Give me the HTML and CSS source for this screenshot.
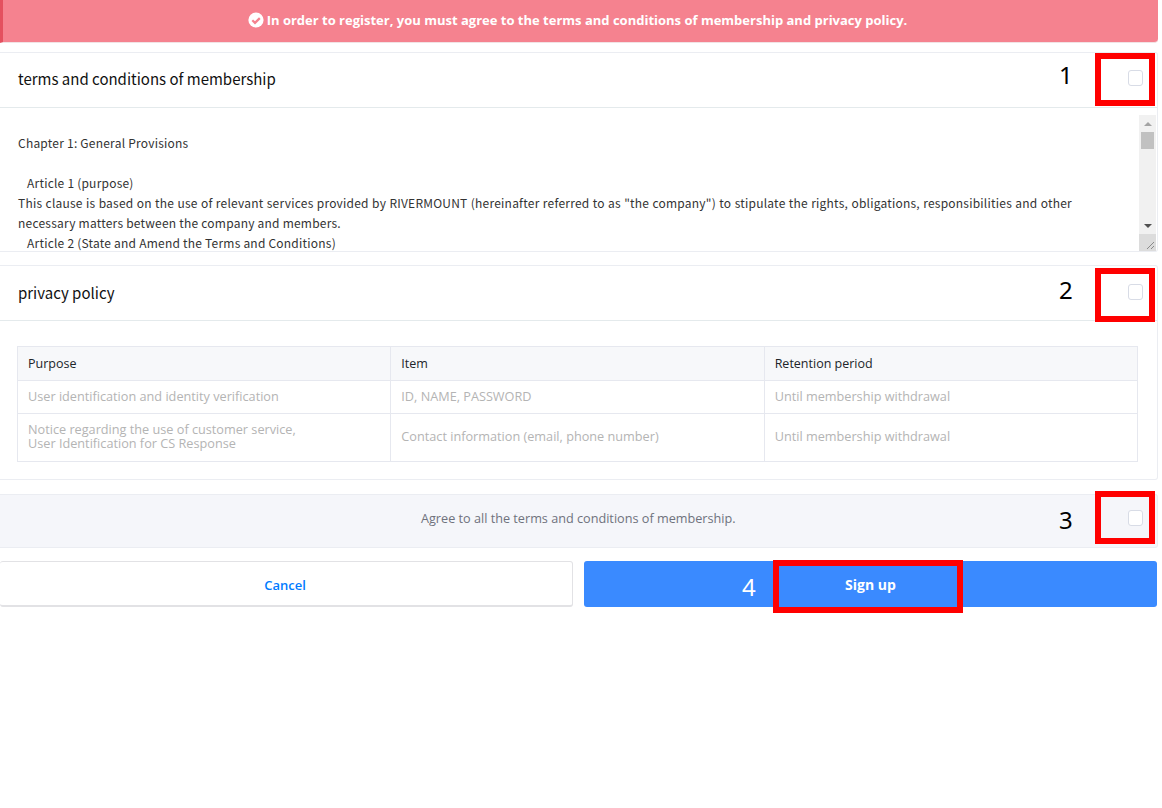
FILE: index.html
```html
<!DOCTYPE html>
<html lang="en">
<head>
<meta charset="utf-8">
<title>Sign up</title>
<link rel="stylesheet" href="styles.css">
</head>
<body>
<main class="page">
  <div class="alert">
    <svg class="alert-icon" viewBox="0 0 16 16" width="16" height="16"><circle cx="8" cy="8" r="7.6" fill="#fff"/><path d="M4.3 8.2 7 10.9l4.8-4.8" fill="none" stroke="#f5828f" stroke-width="2.2"/></svg>
    <span>In order to register, you must agree to the terms and conditions of membership and privacy policy.</span>
  </div>

  <section class="panel panel-terms">
    <header class="panel-head head-terms">
      <h2 class="panel-title">terms and conditions of membership</h2>
      <span class="check"></span>
    </header>
    <div class="terms-body">
      <div class="terms-text">
        <p class="line">Chapter 1: General Provisions</p>
        <p class="line">&nbsp;</p>
        <p class="line indent">Article 1 (purpose)</p>
        <p class="line">This clause is based on the use of relevant services provided by RIVERMOUNT (hereinafter referred to as "the company") to stipulate the rights, obligations, responsibilities and other necessary matters between the company and members.</p>
        <p class="line indent">Article 2 (State and Amend the Terms and Conditions)</p>
      </div>
      <div class="scrollbar">
        <div class="sb-btn"><span class="arrow-up"></span></div>
        <div class="sb-track"><div class="sb-thumb"></div></div>
        <div class="sb-btn"><span class="arrow-down"></span></div>
        <div class="sb-corner">
          <svg viewBox="0 0 16 16" width="16" height="16"><path d="M8 15 15 8M12 15l3-3" stroke="#8a8a8a" stroke-width="1" fill="none"/></svg>
        </div>
      </div>
    </div>
  </section>

  <section class="panel panel-privacy">
    <header class="panel-head head-privacy">
      <h2 class="panel-title">privacy policy</h2>
      <span class="check"></span>
    </header>
    <div class="privacy-body">
      <table class="policy">
        <thead>
          <tr><th>Purpose</th><th>Item</th><th>Retention period</th></tr>
        </thead>
        <tbody>
          <tr class="row-one"><td>User identification and identity verification</td><td>ID, NAME, PASSWORD</td><td>Until membership withdrawal</td></tr>
          <tr class="row-two"><td>Notice regarding the use of customer service,<br>User Identification for CS Response</td><td>Contact information (email, phone number)</td><td>Until membership withdrawal</td></tr>
        </tbody>
      </table>
    </div>
  </section>

  <section class="agree">
    <span class="agree-text">Agree to all the terms and conditions of membership.</span>
    <span class="check check-agree"></span>
  </section>

  <div class="actions">
    <button class="btn btn-cancel" type="button">Cancel</button>
    <button class="btn btn-submit" type="button">Sign up</button>
  </div>
</main>

<span class="mark mark-1"></span>
<span class="mark mark-2"></span>
<span class="mark mark-3"></span>
<span class="mark mark-4"></span>
<span class="num num-1">1</span>
<span class="num num-2">2</span>
<span class="num num-3">3</span>
<span class="num num-4">4</span>
</body>
</html>
```
FILE: styles.css
```css
* { box-sizing: border-box; }
html, body { margin: 0; padding: 0; background: #fff; }
body { font-family: "Open Sans", "Noto Sans", sans-serif; color: #575962; height: 808px; overflow: hidden; position: relative; }
.page { width: 1158px; display: flex; flex-direction: column; }

.alert {
  height: 43px;
  background: #f5828f;
  border-left: 3px solid #e4505f;
  border-bottom: 1px solid #f1e3e5;
  border-radius: 0 0 4px 0;
  color: #fff;
  font-size: 13px;
  font-weight: 700;
  display: flex;
  align-items: center;
  justify-content: center;
  gap: 3px;
  padding: 0 6px 2px 0;
}
.alert-icon { flex: none; }

.panel { background: #fff; border: 1px solid #ebedf2; border-left: 0; border-radius: 0 3px 3px 0; }
.panel-terms { margin-top: 9px; height: 200px; }
.panel-privacy { margin-top: 13px; height: 215px; }

.panel-head {
  height: 55px;
  border-bottom: 1px solid #e4eaec;
  display: flex;
  align-items: center;
  justify-content: space-between;
  padding: 0 14px 0 18px;
}
.head-terms { padding-bottom: 4px; }
.head-privacy { padding-bottom: 1px; }
.head-privacy .check { margin-bottom: 2px; }
.panel-title { margin: 0; font-family: "Noto Sans CJK KR", "Noto Sans", sans-serif; font-size: 15px; font-weight: 400; color: #111; }
.check { width: 15px; height: 16px; border: 1px solid #d8dce6; border-radius: 3px; background: #fff; flex: none; }

.terms-body { height: 143px; display: flex; overflow: hidden; }
.terms-text {
  flex: 1;
  padding: 25px 67px 0 18px;
  font-family: "Noto Sans CJK KR", "Noto Sans", sans-serif;
  font-size: 12px;
  line-height: 20px;
  letter-spacing: 0.22px;
  color: #333;
  text-align: justify;
}
.line { margin: 0; }
.indent { padding-left: 9px; }

.scrollbar { width: 17px; margin: 7px 1px 0 0; background: #f1f1f1; display: flex; flex-direction: column; flex: none; }
.sb-btn { height: 17px; display: flex; align-items: center; justify-content: center; flex: none; }
.arrow-up { border: 4px solid transparent; border-top: 0; border-bottom: 4px solid #a3a3a3; }
.arrow-down { border: 4px solid transparent; border-bottom: 0; border-top: 4px solid #505050; }
.sb-track { flex: 1; padding: 0 2px; }
.sb-thumb { height: 17px; background: #c1c1c1; }
.sb-corner { height: 17px; background: #dcdcdc; flex: none; line-height: 0; }

.privacy-body { padding: 25px 19px 0 17px; }
.policy { width: 1121px; border-collapse: collapse; table-layout: fixed; font-size: 12.5px; }
.policy th, .policy td { border: 1px solid #e6e8ef; padding: 0 10px; text-align: left; vertical-align: middle; }
.policy th { height: 34px; background: #f7f8fa; color: #212529; font-weight: 400; }
.policy td { color: #b4b4b4; font-size: 12.7px; line-height: 14px; }
.row-one td { height: 33px; padding-bottom: 2px; }
.row-two td { height: 48px; padding-bottom: 4px; }

.agree {
  margin-top: 14px;
  height: 54px;
  background: #f5f6fa;
  border: 1px solid #ebedf2;
  border-left: 0;
  border-radius: 0 3px 3px 0;
  position: relative;
  display: flex;
  align-items: center;
  justify-content: space-between;
  padding: 0 14px 7px 421px;
}
.agree-text { font-size: 12.66px; color: #6f727d; }

.actions { margin-top: 13px; display: flex; gap: 11px; }
.btn { height: 46px; border-radius: 3px; font-family: "Open Sans", sans-serif; font-size: 13px; font-weight: 600; padding: 0; }
.btn-cancel { width: 573px; background: #fff; color: #007bff; border: 1px solid #e2e2e5; border-left: 0; border-bottom-width: 2px; padding: 2px 2px 0 0; }
.btn-submit { width: 573px; background: #3a8aff; color: #fff; border: 0; font-size: 14px; font-weight: 700; }

.mark { position: absolute; border: 6px solid #ff0000; }
.mark-1 { left: 1095px; top: 53px; width: 60px; height: 53px; }
.mark-2 { left: 1095px; top: 268px; width: 60px; height: 54px; }
.mark-3 { left: 1095px; top: 491px; width: 60px; height: 53px; }
.mark-4 { left: 773px; top: 560px; width: 190px; height: 53px; }

.num { position: absolute; font-family: "Noto Sans", sans-serif; font-size: 24px; line-height: 32px; color: #000; }
.num-1 { left: 1059px; top: 59px; }
.num-2 { left: 1059px; top: 274px; }
.num-3 { left: 1059px; top: 504px; }
.num-4 { left: 742px; top: 571px; color: #fff; }
```
